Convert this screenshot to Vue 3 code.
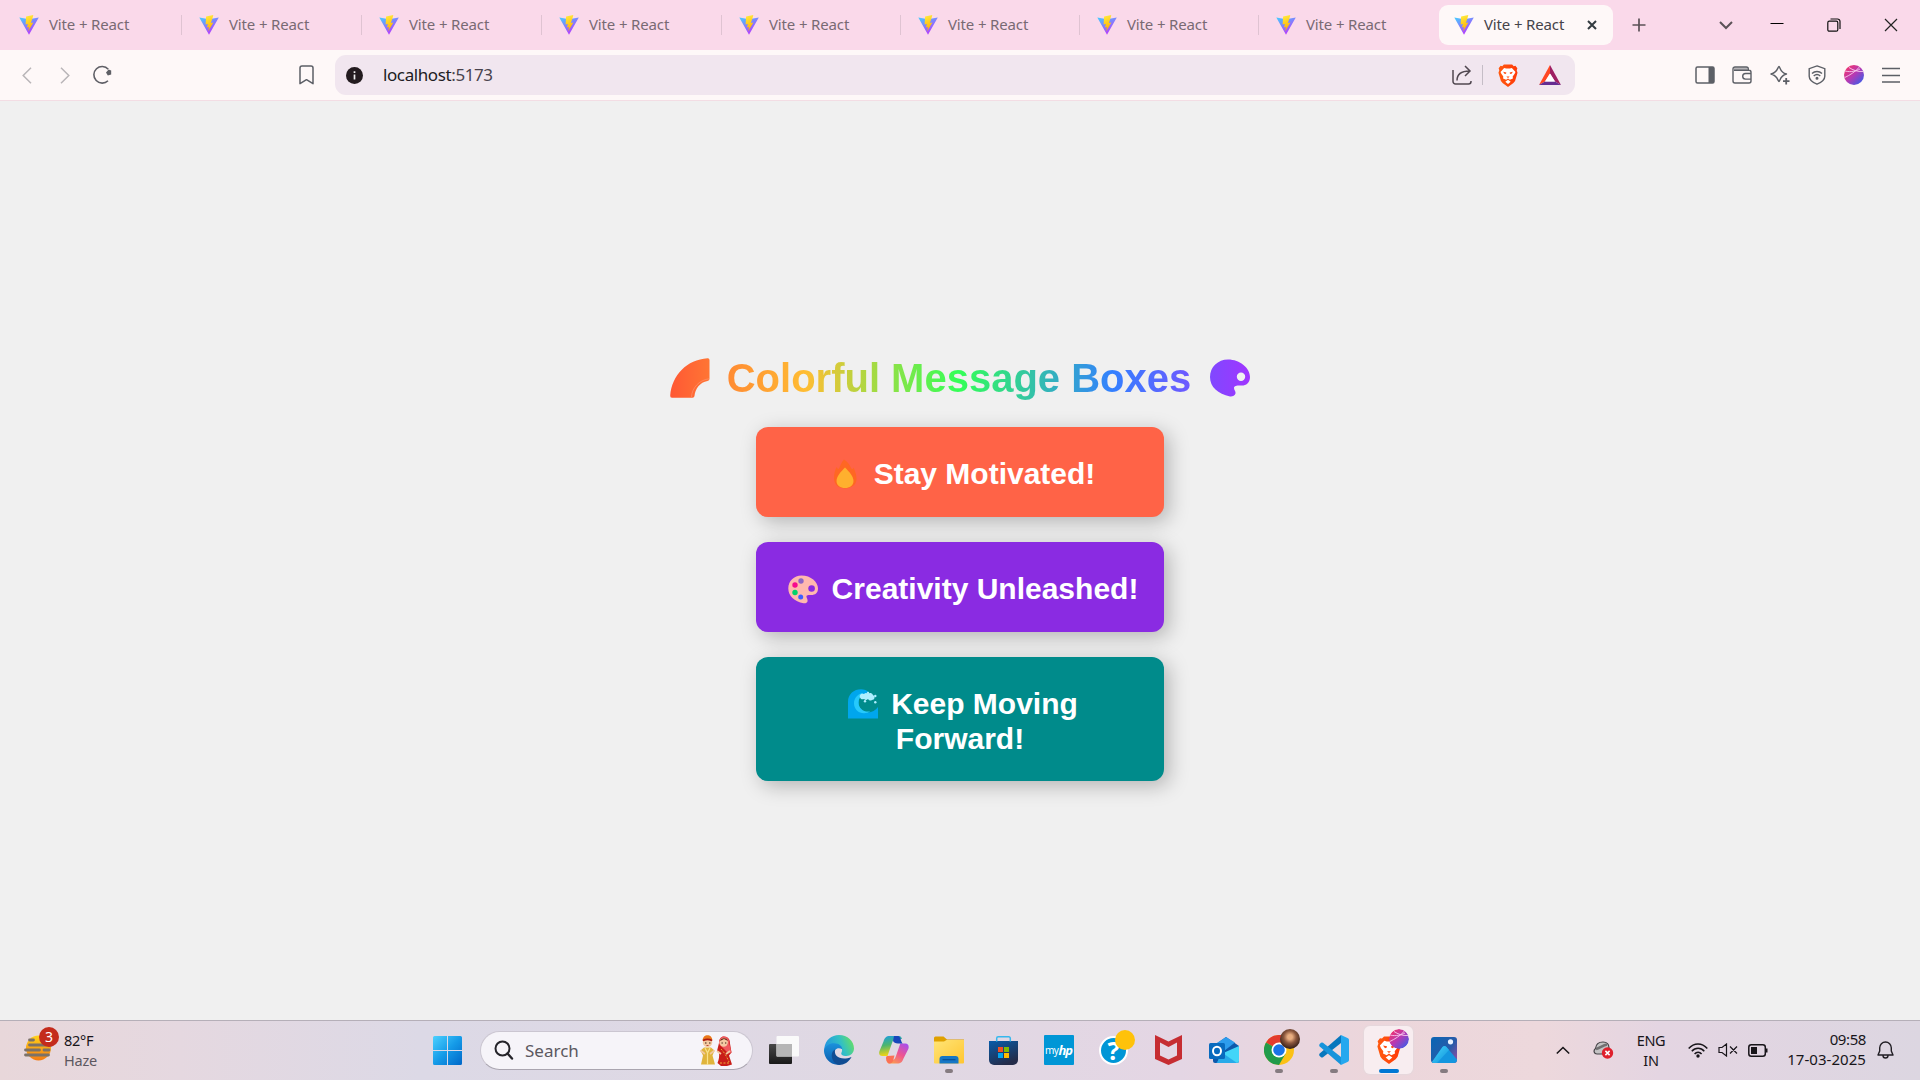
<script setup>
const tabs = [180, 180, 180, 180, 179, 179, 179, 180]
</script>

<template>
  <div class="screen">
    <svg width="0" height="0" class="defs">
      <defs>
        <linearGradient id="vite" x1="0" y1="0" x2=".6" y2="1"><stop stop-color="#41d1ff" /><stop offset="1" stop-color="#bd34fe" /></linearGradient>
        <linearGradient id="bolt" x1=".4" y1="0" x2=".6" y2="1"><stop stop-color="#ffea3a" /><stop offset="1" stop-color="#ffa800" /></linearGradient>
        <linearGradient id="orb" x1="0" y1="0" x2="1" y2="1"><stop offset=".1" stop-color="#f2336d" /><stop offset=".5" stop-color="#b43ab5" /><stop offset=".9" stop-color="#3d5be8" /></linearGradient>
        <linearGradient id="lion" x1="0" x2="1"><stop stop-color="#ff5a10" /><stop offset="1" stop-color="#ff3a08" /></linearGradient>
        <symbol id="vite-logo" viewBox="0 0 20 20">
          <path d="M.3 2.4 10 19.8 19.8 2.4 10 4.2Z" fill="url(#vite)" />
          <path d="m14.300.1-7.200 1.400-.5 8 2.300-.4-1 3.400 2.100-.4-.9 4.400 5.300-9-2.500.4 1.500-4.300Z" fill="url(#bolt)" />
        </symbol>
        <symbol id="brave-logo" viewBox="0 0 24 28">
          <path d="m5 2.6 2-2.1h10l2 2.1 2-.4 2.4 3-.8 2.4 1 3-3 10.2-2 2.4L12 28l-6.600-4.800-2-2.400L.4 10.600l1-3L.6 5.200l2.400-3Z" fill="url(#lion)" />
          <path d="m7.300 4.800 2.500.6h4.400l2.500-.6 4.400 4.800-1 2.400-2.400 3.200.3 2.400-3.700 1.700L12 17.600l-2.300 1.700L6 17.600l.3-2.400L3.900 12l-1-2.400Z" fill="#fff" />
          <path d="m12 19.300 3.300 2.200L12 24.300l-3.300-2.800Z" fill="#fff" />
          <path d="m6 9.500 4 .8-.4 1.500L8 12.300ZM18 9.500l-4 .8.4 1.500 1.600.5ZM10 15.300h4l-2 1.700Z" fill="#ff4b10" />
        </symbol>
        <symbol id="orb-logo" viewBox="0 0 20 20">
          <circle cx="10" cy="10" r="10" fill="url(#orb)" />
          <path d="M.8 12.500C6 10 11 7 15.500 2M5 2.500c4 2.500 8 4.500 14.500 4M1 6c6 1.500 11 0 15-2" fill="none" stroke="#f8c8ee" stroke-width=".9" />
        </symbol>
      </defs>
    </svg>

    <div class="tabstrip">
      <div v-for="(w, i) in tabs" :key="i" class="tab" :class="{ last: i === 7 }" :style="{ width: w + 'px' }">
        <svg width="20" height="20"><use href="#vite-logo" /></svg><span>Vite + React</span>
      </div>
      <div class="tab active">
        <svg width="20" height="20"><use href="#vite-logo" /></svg><span>Vite + React</span>
        <svg class="tabclose" width="10" height="10" viewBox="0 0 10 10"><path d="m1 1 8 8M9 1 1 9" stroke="#333b40" stroke-width="2" /></svg>
      </div>
      <svg class="newtab" width="14" height="14" viewBox="0 0 14 14"><path d="M7 .5v13M.5 7h13" stroke="#5b5157" stroke-width="1.700" /></svg>
      <div class="winctl">
        <svg width="14" height="9" viewBox="0 0 14 9"><path d="m1 1 6 6 6-6" fill="none" stroke="#5b5157" stroke-width="2" /></svg>
        <svg width="14" height="14" viewBox="0 0 14 14"><path d="M.5 5.500h13" stroke="#000" stroke-width="1" /></svg>
        <svg width="14" height="14" viewBox="0 0 14 14" fill="none" stroke="#111" stroke-width="1.200"><rect x=".8" y="3.200" width="10" height="10" rx="1.500" /><path d="M3.500 1h7a2.500 2.500 0 0 1 2.500 2.500v7.500" /></svg>
        <svg width="14" height="14" viewBox="0 0 14 14"><path d="m1 1 12 12M13 1 1 13" stroke="#222" stroke-width="1.200" /></svg>
      </div>
    </div>

    <div class="toolbar">
      <div class="nav">
        <svg width="10" height="17" viewBox="0 0 10 17"><path d="M9 .7 1.200 8.500 9 16.300" fill="none" stroke="#b9b5b8" stroke-width="1.500" /></svg>
        <svg width="10" height="17" viewBox="0 0 10 17"><path d="m1 .7 7.800 7.800L1 16.300" fill="none" stroke="#b9b5b8" stroke-width="1.500" /></svg>
        <svg width="20" height="20" viewBox="0 0 20 20"><path d="M16 15.700A8.300 8.300 0 1 1 16.300 4.200" fill="none" stroke="#5f5f66" stroke-width="1.600" /><path d="m14 7.500 2.600-3 2.600.9v4.200l-3.400.8Z" fill="#5f6066" /></svg>
      </div>
      <svg class="mark" width="15" height="20" viewBox="0 0 15 20"><path d="M1 3a2 2 0 0 1 2-2h9a2 2 0 0 1 2 2v15.700l-6.500-4-6.500 4Z" fill="none" stroke="#5c5f66" stroke-width="1.500" stroke-linejoin="round" /></svg>
      <div class="urlbar">
        <svg width="17" height="17" viewBox="0 0 17 17"><circle cx="8.500" cy="8.500" r="8.500" fill="#231b1f" /><path d="M8.500 7.500v5M8.500 4.200v1.700" stroke="#eee" stroke-width="1.700" /></svg>
        <span class="url">localhost<i>:5173</i></span>
        <svg class="share" width="20" height="20" viewBox="0 0 20 20" fill="none" stroke="#514850" stroke-width="1.500"><path d="M1 5v11.500A2.500 2.500 0 0 0 3.500 19h13a2.500 2.500 0 0 0 2.500-2.500V16" /><path d="M5 15.500C5 9.500 9 6 17.500 6M13 1l5 5-5 5" /></svg>
        <b class="usep"></b>
        <svg class="brave" width="20" height="23"><use href="#brave-logo" /></svg>
        <svg width="22" height="20" viewBox="0 0 22 20"><path d="M11 0 0 20l6-3.500 5-8Z" fill="#ff4724" /><path d="m11 0 11 20-6-3.500-5-8Z" fill="#9e1f63" /><path d="M0 20h22l-6-3.500H6Z" fill="#662d91" /><path d="m11 8.500-5 8h10Z" fill="#fff" /></svg>
      </div>
      <div class="tools">
        <svg width="20" height="20" viewBox="0 0 20 20"><rect x="1" y="2" width="18" height="16" rx="1.500" fill="none" stroke="#5c5f66" stroke-width="1.500" /><path d="M13.500 2H19v16h-5.500Z" fill="#5c5f66" /></svg>
        <svg width="20" height="20" viewBox="0 0 20 20" fill="none" stroke="#5c5f66" stroke-width="1.400"><path d="M2 2.500h13.500v2.700H2Z" fill="#b5b3b7" stroke="none" /><path d="M16.300 5.200V4a2 2 0 0 0-2-2H3a2 2 0 0 0-2 2v12a2 2 0 0 0 2 2h14a2 2 0 0 0 2-2V7.200a2 2 0 0 0-2-2H2" /><path d="M19 8.500h-5.500a2.800 2.800 0 0 0 0 5.600H19" /></svg>
        <svg width="20" height="20" viewBox="0 0 20 20"><path d="M9 1.500c1.200 0 .8 6 7.500 7.500-6.700 1.500-6.300 7.500-7.500 7.500S7.900 10.500 1 9C7.900 7.500 7.800 1.500 9 1.500Z" fill="none" stroke="#5c5f66" stroke-width="1.400" stroke-linejoin="round" /><path d="M16.200 13v6.500M13 16.200h6.500" stroke="#5c5f66" stroke-width="1.800" /></svg>
        <svg width="20" height="20" viewBox="0 0 20 20" fill="none" stroke="#5c5f66" stroke-width="1.400"><path d="m10 .9 7.800 2.800v7.500c0 3.500-3.800 6.300-7.800 8-4-1.700-7.800-4.500-7.800-8V3.700Z" /><path d="M5 8.500c2.800-2.600 7.200-2.600 10 0M6.700 11c2-1.700 4.600-1.700 6.600 0" /><circle cx="10" cy="13.300" r=".8" fill="#5c5f66" /></svg>
        <svg width="20" height="20"><use href="#orb-logo" /></svg>
        <svg width="20" height="20" viewBox="0 0 20 20"><path d="M1 3.500h18M1 10.500h18M1 17h18" stroke="#5c5f66" stroke-width="1.400" /></svg>
      </div>
    </div>

    <main>
      <h1>
        <svg width="40" height="40" viewBox="0 0 40 40"><defs><linearGradient id="rb"><stop stop-color="#ff5834" /><stop offset="1" stop-color="#ff7534" /></linearGradient></defs><path d="M37.500.2Q39.500 0 39.500 2v19q0 1.500-2 1.900C30 24 25 31 24.500 38q-.2 1.700-2 1.700H2Q0 39.700.2 37.500C2 17 17 1.500 37.500.2Z" fill="url(#rb)" /><path d="M21.500 39C22 30 29 22 39 20.800" fill="none" stroke="#ffa184" stroke-width=".5" /></svg>
        <span>Colorful Message Boxes</span>
        <svg width="40" height="38" viewBox="0 0 40 38"><defs><linearGradient id="pl"><stop stop-color="#8048ff" /><stop offset="1" stop-color="#a035ff" /></linearGradient></defs><path fill-rule="evenodd" d="M18 .5C30 .5 40 9 40 18c0 6-4 8.500-8 8.500-3 0-8-.5-8 2.500 0 2 2 3.500 1.500 5.500S22 38 20 37.500C8 35 0 28 0 18 0 8 8 .5 18 .5ZM31 13.500a4.200 4.200 0 1 0 0 8.400 4.200 4.200 0 0 0 0-8.400Z" fill="url(#pl)" /></svg>
      </h1>
      <section class="card fire">
        <svg width="24" height="30" viewBox="0 0 24 30"><path d="M11 .5c3.500 2 5.500 5 7 8.500 1 2 2 1 2.500-.5 2 4 3 8 3 11.500C23.500 26 18 29.500 12 29.500S1 26 1 19c0-4 1-8 2.500-11 1 2 2 2.500 2.500 1.500C7.500 6 8.500 3 11 .5Z" fill="#ff6723" /><path d="M12 8.500c4 4 8.500 9 8.500 13.500 0 4.500-4 7-8.500 7s-8.500-2.500-8.500-7C3.500 17.500 8 12.500 12 8.500Z" fill="#ffb02e" /></svg>
        <span>Stay Motivated!</span>
      </section>
      <section class="card art">
        <svg width="30" height="29" viewBox="0 0 30 29"><path d="M13.500.5C23 .5 30 7 30 13.500c0 4.500-3 6.500-6.500 6.500-3 0-5.500 0-5 2 .3 1.500 1.500 2.500 1 4.500-.5 1.500-2 2-4 1.700C6.500 26.500.3 21 .3 13.500.3 6 6 .5 13.500.5Z" fill="#ffb8ae" /><circle cx="23.600" cy="13.500" r="3.300" fill="#8a2be2" /><circle cx="13" cy="6" r="2.700" fill="#8d65c5" /><circle cx="7" cy="10" r="2.700" fill="#f70a8d" /><circle cx="7" cy="17.500" r="2.700" fill="#00d26a" /><circle cx="12.700" cy="22" r="2.500" fill="#3f5fff" /></svg>
        <span>Creativity Unleashed!</span>
      </section>
      <section class="card wave">
        <div class="row">
          <svg width="30" height="30" viewBox="0 0 30 30"><path d="M0 29.500V13C0 5 6 .3 13 .3c3 0 6 1 8 3L12 8c-3 6-1 13 5 15 5 1.500 10-1 13-5v11.500Z" fill="#00a6ed" /><path d="M14 4C8.500 6 6 10 6 14.500 6 20 10.500 24.300 16 24.300c2.500 0 5-1 6.500-2-6 1.500-12-2.500-12-8.800C10.500 10 12 8 14.500 7Z" fill="#26c9fc" /><path d="M12 6a3 3 0 0 1 4-1 3 3 0 0 1 4 0 3 3 0 0 1 5 1 2.600 2.600 0 0 1-1 5 3 3 0 0 1-4-1 3 3 0 0 1-4 0 3 3 0 0 1-4-4Z" fill="#aeefff" /><g fill="#aeefff"><circle cx="20" cy="4" r="1.200" /><circle cx="27.300" cy="7" r="1.200" /><circle cx="27.300" cy="13.300" r="1.200" /><circle cx="17" cy="12.300" r="1.200" /></g></svg>
          <span>Keep Moving</span>
        </div>
        <span>Forward!</span>
      </section>
    </main>

    <footer>
      <div class="weather">
        <div class="sun">
          <svg width="34" height="36" viewBox="0 0 34 36"><defs><linearGradient id="sun" x2="0" y2="1"><stop stop-color="#ffd21a" /><stop offset="1" stop-color="#f47b13" /></linearGradient></defs><circle cx="15.500" cy="22" r="12.500" fill="url(#sun)" /><path d="M6.500 14h4M6.500 19h22M2.500 24h14M21 24h5M2.500 29h23" stroke="#7c7268" stroke-width="2.800" stroke-linecap="round" /></svg>
          <span class="count">3</span>
        </div>
        <div><div class="deg">82°F</div><div class="haze">Haze</div></div>
      </div>
      <svg class="win" width="29" height="29" viewBox="0 0 29 29"><defs><linearGradient id="win" x2="1" y2="1"><stop stop-color="#4dd1ff" /><stop offset=".5" stop-color="#159be8" /><stop offset="1" stop-color="#0067c8" /></linearGradient></defs><path d="M1.500 0H14v14H0V1.500A1.500 1.500 0 0 1 1.500 0ZM15 0h12.500A1.500 1.500 0 0 1 29 1.500V14H15ZM0 15h14v14H1.500A1.500 1.500 0 0 1 0 27.500ZM15 15h14v12.500a1.500 1.500 0 0 1-1.500 1.500H15Z" fill="url(#win)" /></svg>
      <div class="search">
        <svg width="20" height="20" viewBox="0 0 20 20"><circle cx="8.500" cy="8.500" r="7" fill="none" stroke="#25242a" stroke-width="2" /><path d="m13.500 13.500 4.500 5" stroke="#25242a" stroke-width="2.400" stroke-linecap="round" /></svg>
        <span>Search</span>
        <svg class="couple" width="32" height="31" viewBox="0 0 32 31">
          <path d="M4 12.500h7l3.500 3-2 5 2.500 9H1l2-9-2.500-5Z" fill="#e0b43c" /><path d="M5 13l2.500 5v12M10 13l-2.500 5" stroke="#fae28a" stroke-width="1.200" fill="none" /><path d="M.5 15.500 5 19M14.500 15.500 10 19" stroke="#f1c8a0" stroke-width="1.700" />
          <circle cx="7.500" cy="7.500" r="4.700" fill="#f4caa2" /><path d="M2.700 6C2.500 2 5 .3 7.500.3S12.500 2 12.300 6C9 4.500 6 4.500 2.700 6Z" fill="#ea781b" /><path d="M3 5.500c3-1.500 6-1.500 9 0" stroke="#ab1710" stroke-width="1.500" fill="none" /><path d="M5 8h1.500M9 8h1.500" stroke="#392015" /><path d="M6.500 10.500h2" stroke="#bb4b38" />
          <path d="M17.500 28c1.500-4 2-7 1.500-10l-2-2 2-8c0-4 2-6.500 5-6.500 4 0 6 3 6 7l1.500 9-2.500 3 3 9-5 1.500h-6Z" fill="#c91e18" /><path d="M19 9c0-5 2-7.500 5-7.500 4 0 5.500 3 5.500 8l2 8-3 1Z" fill="#ef5a5e" /><circle cx="23.700" cy="7.500" r="4.200" fill="#f4caa2" /><path d="M20 6c1-3 6-4 8 0l-4-2Z" fill="#612010" /><path d="M21.500 8h1.300M25 8h1.300" stroke="#392015" /><path d="m17 16 4 3M30 16l-4 3" stroke="#f1c8a0" stroke-width="1.800" /><path d="M21 14c3 3 6 8 8 13M20 28h10" stroke="#ecaa36" stroke-dasharray="2 1.500" fill="none" />
        </svg>
      </div>

      <div class="apps">
        <div class="app"><svg width="30" height="28" viewBox="0 0 30 28"><defs><linearGradient id="tvd" x2="0" y2="1"><stop stop-color="#484848" /><stop offset="1" stop-color="#191919" /></linearGradient></defs><rect y="8" width="23" height="20" rx="1" fill="url(#tvd)" /><rect x="7.500" width="22.500" height="20.500" rx="1" fill="#fafafa" /><path d="M7.500 8H23v12.500H7.500Z" fill="#b6b6b6" /></svg></div>
        <div class="app"><svg width="30" height="30" viewBox="0 0 30 30"><defs><linearGradient id="eg" y1=".3"><stop stop-color="#2398df" /><stop offset=".5" stop-color="#32c0c4" /><stop offset="1" stop-color="#73e64d" /></linearGradient><linearGradient id="eb" x2="0" y2="1"><stop stop-color="#1b91dc" /><stop offset="1" stop-color="#0b5cad" /></linearGradient></defs><path d="M.3 13C1.500 5 7.500 0 15 0c8.500 0 15 6 15 13.500 0 4.500-3.500 7.500-7.500 7.500-4 0-6-1.500-5-3.500 1.500-2.500.5-7-5-7C7 10.500 2 13 0 18Z" fill="url(#eg)" /><path d="M0 15.500C1 11 5.500 8.300 10 8.300c5 0 8.300 3 8.300 6-4.500-3-8.800.2-7.600 5 1.300 4.500 6 7 10.500 6.500-2 3-5 4.200-8 4C6 29.300 0 23 0 15.500Z" fill="url(#eb)" /><path d="M11 14.500c-1.500 7 6 11.500 16.500 7.500-2.500 5-7.500 8-12.500 8C8 28.500 5 18 11 14.500Z" fill="#104d93" /></svg></div>
        <div class="app"><svg width="30" height="28" viewBox="0 0 30 28"><defs><linearGradient id="ca" x2=".2" y2="1"><stop stop-color="#1b9de5" /><stop offset=".5" stop-color="#4db56e" /><stop offset="1" stop-color="#f2d514" /></linearGradient><linearGradient id="cb" x1=".9" x2=".2" y2="1"><stop stop-color="#a54cf0" /><stop offset=".5" stop-color="#ee5590" /><stop offset="1" stop-color="#fda04b" /></linearGradient></defs><path d="M20 0h-9C7 0 5.500 2 4.500 5.500L.5 15c-1 3 0 5 3 5h5l4.500-13C14 4 15 3 17 3h6C22.500 1 21.500 0 20 0Z" fill="url(#ca)" /><path d="M10 27.500h8c4 0 5.500-2 6.500-5L29.300 13c1-3 0-5.500-3-5.500h-5l-4.500 13C16 23 15 24 13 24H7.500c.4 2 1.200 3.500 2.500 3.500Z" fill="url(#cb)" /><path d="M15 0h4c3 0 3 7.500 5 7.500h-5c-3 0-4-1-5-2.500Z" fill="#1746bb" /><path d="M8.500 20c-3 0-1 7.500 2 7.500 4 0 4-5 5-8Z" fill="#fb7055" /></svg></div>
        <div class="app dot"><svg width="30" height="28" viewBox="0 0 30 28"><defs><linearGradient id="fo" x2="1" y2="1"><stop stop-color="#ffe477" /><stop offset="1" stop-color="#ffc631" /></linearGradient></defs><path d="M0 2a1.500 1.500 0 0 1 1.500-1.500h8L13 3.500h17V12H0Z" fill="#dfa000" /><path d="M0 5.500h10l2.500-1.500H30v22.500a1 1 0 0 1-1 1H1a1 1 0 0 1-1-1Z" fill="url(#fo)" /><path d="M5.500 27.500V23a3 3 0 0 1 3-3h13a3 3 0 0 1 3 3v4.500Z" fill="#1677c5" /><path d="M8.500 23.700h13" stroke="#074f96" stroke-width="1.200" /></svg></div>
        <div class="app"><svg width="29" height="29" viewBox="0 0 29 29"><defs><linearGradient id="st" x2=".5" y2="1"><stop stop-color="#075caa" /><stop offset="1" stop-color="#242c4a" /></linearGradient></defs><path d="M0 5h29v19a5 5 0 0 1-5 5H5a5 5 0 0 1-5-5Z" fill="url(#st)" /><path d="M7.700 5.500V2.300A1.500 1.500 0 0 1 9.200.8h10.600a1.500 1.500 0 0 1 1.500 1.500v3.200" fill="none" stroke="#37b8ed" stroke-width="1.500" /><path d="M9 11h5v5H9Z" fill="#f25022" /><path d="M15 11h5v5h-5Z" fill="#7fba00" /><path d="M9 17h5v5H9Z" fill="#00a4ef" /><path d="M15 17h5v5h-5Z" fill="#ffb900" /></svg></div>
        <div class="app"><div class="hp"><span>my</span><b>hp</b></div></div>
        <div class="app"><div class="help">?<i></i></div></div>
        <div class="app"><svg width="27" height="30" viewBox="0 0 27 30"><path d="m0 0 13.500 6.500L27 0v24L13.500 30 0 24Zm5 7.500v13l8.500 4 8.500-4v-13L13.500 12Z" fill="#c62d32" fill-rule="evenodd" /></svg></div>
        <div class="app"><svg width="30" height="28" viewBox="0 0 30 28"><path d="M4 10 17 1l13 9v15a2 2 0 0 1-2 2H6a2 2 0 0 1-2-2Z" fill="#0d59ab" /><path d="M8 7 17 1l9 5.500L15 15Z" fill="#2d9ced" /><path d="m12 18 18-8v15a2 2 0 0 1-2 2H8Z" fill="#42d5f8" /><path d="m15 18 13 9H7Z" fill="#168ee0" opacity=".6" /><rect y="7" width="16" height="16" rx="1.500" fill="#086abe" /><ellipse cx="8" cy="15" rx="4" ry="4.300" fill="none" stroke="#fff" stroke-width="2" /></svg></div>
        <div class="app dot"><svg width="30" height="30" viewBox="0 0 30 30"><circle cx="15" cy="15" r="15" fill="#fbc116" /><path d="M15 15 2 7.500A15 15 0 0 1 28 7.500H15Z" fill="#e33b2e" /><path d="M2 7.500A15 15 0 0 0 15 30l6.500-11.200L15 15Z" fill="#219b4b" /><circle cx="15" cy="15" r="7.500" fill="#fff" /><circle cx="15" cy="15" r="5.800" fill="#1a73e8" /></svg><i class="badge face"></i></div>
        <div class="app dot"><svg width="30" height="30" viewBox="0 0 30 30"><path d="M22 8v14l-9-7Z" fill="#ecd9df" /><path d="M.7 18.500 22 0v8L4 22.300q-1 .6-2 0L.7 21q-1-1.300 0-2.500Z" fill="#0877bd" /><path d="M.7 11.500 22 30v-8L4 7.700q-1-.6-2 0L.7 9q-1 1.300 0 2.500Z" fill="#1794db" /><path d="m22 0 7 3.300q1 .5 1 1.700v20q0 1.200-1 1.700L22 30Z" fill="#25a8ef" /></svg></div>
        <div class="app current"><svg width="24" height="30"><use href="#brave-logo" /></svg><svg class="badge" width="20" height="20"><use href="#orb-logo" /></svg></div>
        <div class="app dot"><svg width="26" height="26" viewBox="0 0 26 26"><defs><linearGradient id="ph" x2="1" y2=".7"><stop stop-color="#0866b5" /><stop offset=".7" stop-color="#2a5ba8" /><stop offset="1" stop-color="#7951a5" /></linearGradient><linearGradient id="pm" x2="1" y2="1"><stop stop-color="#4bd6fa" /><stop offset="1" stop-color="#0b91dc" /></linearGradient></defs><rect width="26" height="26" rx="3" fill="url(#ph)" /><path d="M1 25 11.500 10q2-2 4 0L26 22.500a3 3 0 0 1-3 3.500H3q-1.500 0-2-1Z" fill="#1496df" /><path d="M1 25 11.500 10q2-2 4 0L18 13 6 26H3q-1.500 0-2-1Z" fill="url(#pm)" /><circle cx="19.500" cy="4.800" r="2.600" fill="#e8f2ff" /></svg></div>
      </div>

      <svg class="up" width="14" height="9" viewBox="0 0 14 9"><path d="m.8 7.500 6.200-6 6.200 6" fill="none" stroke="#191619" stroke-width="1.600" /></svg>
      <svg class="cloud" width="21" height="18" viewBox="0 0 21 18"><path d="M4 13c-3 0-4-3.500-1.500-5.500C3 3 6.500 1 10 1c3.500 0 6 2 6 6v6Z" fill="#c4c3c4" stroke="#444246" stroke-width="1.200" /><path d="M3 8C7 7 10 4 14 3.500" stroke="#727072" stroke-width="2.500" fill="none" /><circle cx="14.500" cy="12" r="5.700" fill="#df202d" /><path d="m12.400 9.900 4.200 4.200M16.600 9.900l-4.200 4.200" stroke="#fff" stroke-width="1.500" /></svg>
      <div class="lang">ENG<br />IN</div>
      <svg class="wifi" width="20" height="15" viewBox="0 0 20 15" fill="none" stroke="#18151a" stroke-width="1.500"><path d="M.7 5.500C6-.5 14-.5 19.300 5.500M3.800 8.200c3.500-4 9-4 12.500 0M6.600 11c2-2.400 5-2.400 7 0" /><circle cx="10" cy="13" r="1.700" fill="#18151a" stroke="none" /></svg>
      <svg class="vol" width="20" height="14" viewBox="0 0 20 14" fill="none" stroke="#18151a" stroke-width="1.200"><path d="M1 4.500h3L8.500 1v12L4 9.500H1ZM12 3.500l7 7M19 3.500l-7 7" /></svg>
      <svg class="bat" width="20" height="13" viewBox="0 0 20 13"><rect x=".8" y=".8" width="16.500" height="11.400" rx="2.500" fill="none" stroke="#18151a" stroke-width="1.500" /><path d="M3 3h6v7H3ZM18 4.500h1.500v4H18Z" fill="#18151a" /></svg>
      <div class="clock"><span>09:58</span><br />17-03-2025</div>
      <svg class="bell" width="17" height="18" viewBox="0 0 17 18" fill="none" stroke="#211e24" stroke-width="1.400"><path d="M1 14 2.700 10V6.800a5.800 5.800 0 0 1 11.600 0V10L16 14ZM6 14.500a2.500 2.500 0 0 0 5 0" stroke-linejoin="round" /></svg>
    </footer>
  </div>
</template>

<style>
body { margin: 0; overflow: hidden; }
</style>
<style scoped>
* { box-sizing: border-box; }
svg { flex: none; display: block; }
.defs { position: absolute; }
.screen { width: 1920px; height: 1080px; display: flex; flex-direction: column; background: #f0f0f0; font-family: "Noto Sans", "Open Sans", sans-serif; }
.tabstrip { height: 50px; flex: none; display: flex; align-items: center; padding-left: 2px; background: #fad9ea; }
.tab { height: 20px; flex: none; display: flex; align-items: center; gap: 10px; padding-left: 17px; border-right: 1px solid #dfc3d2; font-size: 15px; letter-spacing: -0.15px; color: #786a73; white-space: nowrap; }
.tab.last { border-color: transparent; }
.tab.active { width: 174px; height: 40px; padding-left: 15px; border: 0; border-radius: 9px; background: #fef8f8; color: #45434a; }
.tab span { width: 80px; padding-bottom: 2px; }
.tabclose { margin-left: 13px; }
.newtab { margin-left: 19px; }
.winctl { flex: 1; display: flex; align-items: center; justify-content: flex-end; padding-right: 22px; }
.winctl svg + svg { margin-left: 43px; }
.winctl svg:nth-child(2) { margin-left: 37px; }
.toolbar { height: 51px; flex: none; display: flex; align-items: center; background: #fef8f8; border-bottom: 1px solid #f3dde4; }
.nav { display: flex; align-items: center; gap: 28px; padding-left: 22px; width: 299px; }
.nav svg:last-child { margin-left: -6px; }
.urlbar { margin-left: 21px; width: 1240px; height: 40px; border-radius: 11px; background: #f1e6ef; display: flex; align-items: center; padding: 0 14px 0 11px; }
.url { margin-left: 20px; padding-bottom: 2px; flex: 1; font-size: 17px; letter-spacing: -0.4px; color: #211c23; }
.url i { font-style: normal; color: #49434d; }
.usep { width: 1px; height: 20px; background: #c5bdc6; margin: 0 15px 0 10px; }
.brave { margin-right: 21px; }
.tools { display: flex; gap: 17.300px; margin-left: 120px; }

main { flex: 1; display: flex; flex-direction: column; align-items: center; font-family: "Liberation Sans", Arial, sans-serif; font-weight: bold; padding-top: 254px; }
h1 { margin: 0 0 26px; height: 46px; display: flex; align-items: center; font-size: 40px; line-height: 46px; white-space: nowrap; }
h1 span { margin: 0 19px 0 17px; color: transparent; background: linear-gradient(90deg, #ff8a33, #ffbd33 17%, #33ff57 50%, #3380ff 83%, #6f58ff); background-clip: text; -webkit-background-clip: text; }
.card { width: 408px; min-height: 90px; margin-bottom: 25px; padding: 29px 0 26px; border-radius: 12px; display: flex; justify-content: center; color: #fff; font-size: 30px; line-height: 35px; white-space: nowrap; box-shadow: 5px 5px 20px rgba(0, 0, 0, .25); }
.fire { background: #ff6347; }
.fire svg { margin: 3px 17px 0 8px; }
.art { background: #8a2be2; padding-left: 6px; }
.art svg { margin: 4px 14px 0 0; }
.wave { height: 124px; background: #008b8b; flex-direction: column; align-items: center; }
.row { display: flex; padding-left: 6px; }
.row svg { margin: 3px 13px 0 0; }

footer { height: 60px; flex: none; display: flex; align-items: center; padding-bottom: 1px; border-top: 1px solid #b5afb8; background: linear-gradient(90deg, #e8d7da 0, #e5d8e0 180px, #dcd9e6 420px, #e0d8e3 900px, #e4d6e4 1180px, #ecd6db 1370px, #edd8dc 1540px, #e4d5e2 1660px, #dcd6e1 1920px); color: #18151a; }
.weather { width: 433px; display: flex; align-items: center; padding: 0 0 1px 23px; font-size: 14.500px; line-height: 20px; }
.sun { position: relative; margin: -11px 7px 0 0; }
.count { position: absolute; left: 16px; top: 1px; width: 20px; height: 20px; border-radius: 50%; background: #c42b1c; color: #fff; font-size: 14px; line-height: 19px; text-align: center; }
.deg { letter-spacing: -.3px; }
.haze { color: #5d5760; letter-spacing: -.2px; }
.search { margin-left: 18px; width: 273px; height: 39px; border: 1px solid #cbc6d1; border-bottom-color: #aaa5b0; border-radius: 20px; background: #f6f4f9; display: flex; align-items: center; padding: 0 20px 0 13px; font-size: 17px; color: #5b5860; }
.search span { flex: 1; margin-left: 11px; }
.apps { display: flex; margin-left: 3px; }
.app { position: relative; width: 55px; height: 48px; display: flex; align-items: center; justify-content: center; border-radius: 6px; }
.dot::after { content: ""; position: absolute; left: 24px; bottom: 1px; width: 8px; height: 4px; border-radius: 2px; background: #857b80; }
.current { width: 49px; margin: 0 3px; background: #f8edf0; box-shadow: 0 0 1px 1px #e6d8dc; }
.current::after { content: ""; position: absolute; left: 14.500px; bottom: 1px; width: 20px; height: 4px; border-radius: 2px; background: #0078d4; }
.badge { position: absolute; left: 28px; top: 3px; width: 20px; height: 20px; border-radius: 50%; }
.current .badge { left: 25px; }
.face { left: 29px; background: radial-gradient(circle at 50% 40%, #e8ad80 0 15%, #8b573d 40%, #3c241b 72%); }
.hp { width: 30px; height: 30px; background: #0096d6; border-radius: 1px; color: #fff; display: flex; align-items: center; justify-content: center; font-size: 10px; letter-spacing: -.5px; }
.hp b { font-size: 13px; font-style: italic; letter-spacing: -1px; }
.help { position: relative; width: 29px; height: 29px; border: 2px solid #fff; border-radius: 50%; background: #0096d6; color: #fff; font: bold 25px/25px "Noto Sans", sans-serif; text-align: center; }
.help i { position: absolute; left: 14px; top: -8px; width: 20px; height: 20px; border-radius: 50%; background: #ffc20a; }
.up { margin-left: 85px; }
.cloud { margin-left: 23px; }
.lang { width: 50px; margin-left: 12px; padding-bottom: 1px; text-align: center; font-size: 14.500px; letter-spacing: -.3px; line-height: 20px; }
.wifi { margin-left: 12px; }
.vol { margin-left: 10px; }
.bat { margin-left: 10px; }
.clock { width: 98px; padding-bottom: 2px; text-align: right; font-size: 15px; line-height: 20px; letter-spacing: .05px; }
.clock span { letter-spacing: -.4px; }
.bell { margin-left: 11px; }
</style>
